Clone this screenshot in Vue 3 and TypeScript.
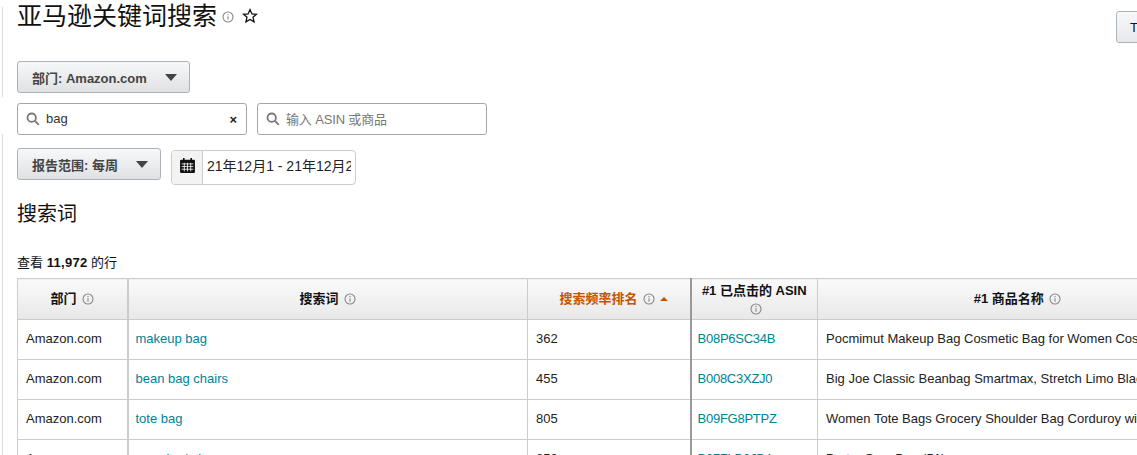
<script setup lang="ts">
interface Row { dept: string; term: string; rank: string; asin: string; title: string }
const rows: Row[] = [
  { dept: 'Amazon.com', term: 'makeup bag', rank: '362', asin: 'B08P6SC34B', title: 'Pocmimut Makeup Bag Cosmetic Bag for Women Cosmetic Travel' },
  { dept: 'Amazon.com', term: 'bean bag chairs', rank: '455', asin: 'B008C3XZJ0', title: 'Big Joe Classic Beanbag Smartmax, Stretch Limo Black' },
  { dept: 'Amazon.com', term: 'tote bag', rank: '805', asin: 'B09FG8PTPZ', title: 'Women Tote Bags Grocery Shoulder Bag Corduroy with Zipper' },
  { dept: 'Amazon.com', term: 'crossbody bag', rank: '850', asin: 'B07ZLB3JB4', title: 'Barter Sam Bag (51)' },
]
</script>

<template>
  <div class="page">
    <div class="rail rail-top"></div>
    <div class="rail rail-bottom"></div>
    <main class="content">
      <header class="title-row">
        <h1 class="title">亚马逊关键词搜索</h1>
        <svg class="info title-info" viewBox="0 0 12 12"><circle cx="6" cy="6" r="5" /><path d="M6 5.200v3.600M6 3v1.200" /></svg>
        <svg class="star" viewBox="0 0 16 16"><path d="M8 1.600l1.900 4.300 4.600.4-3.500 3 1.100 4.600L8 11.500l-4.100 2.400 1.100-4.600-3.500-3 4.600-.4z" /></svg>
      </header>
      <button class="top-btn">T</button>

      <button class="select dept-select">部门: Amazon.com<span class="caret"></span></button>

      <div class="search-row">
        <div class="field">
          <svg class="mag" viewBox="0 0 14 14"><circle cx="5.700" cy="5.700" r="4.200" /><path d="M8.800 8.800l4 4" /></svg>
          <span class="value">bag</span>
          <span class="clear">×</span>
        </div>
        <div class="field">
          <svg class="mag" viewBox="0 0 14 14"><circle cx="5.700" cy="5.700" r="4.200" /><path d="M8.800 8.800l4 4" /></svg>
          <span class="placeholder">输入 ASIN 或商品</span>
        </div>
      </div>

      <div class="range-row">
        <button class="select range-select">报告范围: 每周<span class="caret"></span></button>
        <div class="date">
          <span class="cal">
            <svg viewBox="0 0 16 16"><path class="cal-body" d="M1 3.500a1 1 0 0 1 1-1h12a1 1 0 0 1 1 1V14a1 1 0 0 1-1 1H2a1 1 0 0 1-1-1z" /><path class="cal-grid" d="M2.500 6.500h11M2.500 9h11M2.500 11.500h11M5 5.500v8M8 5.500v8M11 5.500v8" /><path class="cal-ring" d="M4.500 1v2.500M11.500 1v2.500" /></svg>
          </span>
          <span class="date-text">21年12月1 - 21年12月2</span>
        </div>
      </div>

      <h2 class="section">搜索词</h2>
      <p class="count">查看 <b>11,972</b> 的行</p>

      <table class="grid">
        <colgroup>
          <col class="c-dept" /><col class="c-term" /><col class="c-rank" /><col class="c-asin" /><col class="c-title" />
        </colgroup>
        <thead>
          <tr>
            <th class="thick">部门 <svg class="info" viewBox="0 0 12 12"><circle cx="6" cy="6" r="5" /><path d="M6 5.200v3.600M6 3v1.200" /></svg></th>
            <th>搜索词 <svg class="info" viewBox="0 0 12 12"><circle cx="6" cy="6" r="5" /><path d="M6 5.200v3.600M6 3v1.200" /></svg></th>
            <th class="sorted dark">搜索频率排名 <svg class="info" viewBox="0 0 12 12"><circle cx="6" cy="6" r="5" /><path d="M6 5.200v3.600M6 3v1.200" /></svg><span class="sort-up"></span></th>
            <th class="two-line">#1 已点击的 ASIN<br /><svg class="info" viewBox="0 0 12 12"><circle cx="6" cy="6" r="5" /><path d="M6 5.200v3.600M6 3v1.200" /></svg></th>
            <th>#1 商品名称 <svg class="info" viewBox="0 0 12 12"><circle cx="6" cy="6" r="5" /><path d="M6 5.200v3.600M6 3v1.200" /></svg></th>
          </tr>
        </thead>
        <tbody>
          <tr v-for="row in rows" :key="row.asin">
            <td class="thick">{{ row.dept }}</td>
            <td class="term-cell"><a class="link">{{ row.term }}</a></td>
            <td class="dark">{{ row.rank }}</td>
            <td class="asin-cell"><a class="link">{{ row.asin }}</a></td>
            <td class="clip"><span>{{ row.title }}</span></td>
          </tr>
        </tbody>
      </table>
    </main>
  </div>
</template>

<style>
html, body { margin: 0; overflow: hidden; background: #fff; }
</style>

<style scoped>
.page {
  position: relative;
  width: 1137px;
  height: 455px;
  overflow: hidden;
  background: #fff;
  color: #111;
  font-family: "Liberation Sans", "Noto Sans CJK SC", sans-serif;
  font-size: 13px;
}
.rail {
  position: absolute;
  left: 2px;
  width: 1px;
  background: #ddd;
}
.rail-top { top: 7px; height: 90px; }
.rail-bottom { top: 134px; bottom: 0; }
.content {
  position: absolute;
  left: 17px;
  top: 0;
  width: 1200px;
}
.title-row {
  display: flex;
  align-items: center;
  height: 32px;
}
.title {
  margin: 0;
  font-size: 25px;
  font-weight: 400;
  line-height: 32px;
  color: #111;
}
.info {
  width: 12px;
  height: 12px;
  margin-left: 2px;
  vertical-align: -2px;
  fill: none;
  stroke: #888;
  stroke-width: 1.100;
}
.title-info { margin-left: 5px; margin-top: 2px; }
.star {
  width: 16px;
  height: 16px;
  margin-left: 8px;
  margin-bottom: 1px;
  fill: none;
  stroke: #111;
  stroke-width: 1.300;
}
.top-btn {
  position: absolute;
  left: 1099px;
  top: 11px;
  width: 60px;
  height: 32px;
  padding: 0 0 0 13px;
  text-align: left;
  border: 1px solid #adb1b8;
  border-radius: 3px;
  background: linear-gradient(#f7f8fa, #e7e9ec);
  font: inherit;
  color: #111;
}
.select {
  display: flex;
  align-items: center;
  justify-content: space-between;
  box-sizing: border-box;
  height: 32px;
  padding: 0 12px 0 14px;
  border: 1px solid #adb1b8;
  border-radius: 3px;
  background: linear-gradient(#f7f8fa, #e0e1e3);
  color: #444;
  font: inherit;
  font-weight: 700;
}
.dept-select { width: 173px; margin-top: 29px; }
.caret {
  width: 0;
  height: 0;
  border-left: 6.500px solid transparent;
  border-right: 6.500px solid transparent;
  border-top: 7px solid #444;
}
.search-row {
  display: flex;
  gap: 10px;
  margin-top: 10px;
}
.field {
  display: flex;
  align-items: center;
  box-sizing: border-box;
  width: 230px;
  height: 32px;
  padding: 0 8px;
  border: 1px solid #a6a6a6;
  border-radius: 3px;
}
.mag {
  width: 14px;
  height: 14px;
  fill: none;
  stroke: #777;
  stroke-width: 1.800;
}
.value { margin: 0 0 2px 6px; flex: 1; color: #333; }
.placeholder { margin: 0 0 2px 6px; color: #777; letter-spacing: -.15px; }
.clear { font-weight: 700; font-size: 13px; line-height: 1; color: #222; margin-right: 1px; }
.range-row {
  display: flex;
  align-items: flex-start;
  gap: 10px;
  margin-top: 13px;
}
.range-select { width: 144px; }
.date {
  display: flex;
  box-sizing: border-box;
  width: 185px;
  height: 35px;
  margin-top: 2px;
  border: 1px solid #ccc;
  border-radius: 4px;
  overflow: hidden;
}
.cal {
  display: flex;
  align-items: center;
  justify-content: center;
  flex: none;
  width: 30px;
  padding-bottom: 4px;
  background: #f3f3f3;
  border-right: 1px solid #ccc;
}
.cal svg { width: 17px; height: 17px; }
.cal-body { fill: #111; }
.cal-grid { stroke: #f3f3f3; stroke-width: .8; fill: none; }
.cal-ring { stroke: #111; stroke-width: 1.500; }
.date-text {
  width: 144px;
  margin-left: 4px;
  font-size: 14px;
  line-height: 31px;
  white-space: nowrap;
  overflow: hidden;
  color: #222;
}
.section {
  margin: 15px 0 0;
  font-size: 20px;
  font-weight: 400;
  line-height: 28px;
  color: #111;
}
.count {
  margin: 26px 0 0;
  line-height: 18px;
  color: #111;
}
.count b { letter-spacing: .3px; }
.grid {
  margin-top: 6px;
  table-layout: fixed;
  border-collapse: collapse;
  width: 1200px;
  background: #fff;
}
.c-dept { width: 110px; }
.c-term { width: 400px; }
.c-rank { width: 163px; }
.c-asin { width: 127px; }
.c-title { width: 400px; }
th, td {
  box-sizing: border-box;
  border: 1px solid #ccc;
  padding: 0 8px;
  font-size: 13px;
}
th {
  height: 41px;
  text-align: center;
  font-weight: 700;
  color: #111;
  line-height: 18px;
  background: linear-gradient(#fafafa, #e8e8e8);
}
td {
  height: 40px;
  padding-bottom: 2px;
  color: #222;
  white-space: nowrap;
}
.sorted { padding-left: 18px; color: #c45500; }
.two-line { padding-top: 2px; }
.two-line .info { margin-left: 4px; }
.term-cell { padding-left: 7px; }
.asin-cell { padding-left: 6px; letter-spacing: -.25px; }
.thick { border-right: 2px solid #ccc; }
.dark { border-right: 2px solid #999; }
.sort-up {
  display: inline-block;
  width: 0;
  height: 0;
  margin-left: 5px;
  vertical-align: 2px;
  border-left: 4px solid transparent;
  border-right: 4px solid transparent;
  border-bottom: 4px solid #c45500;
}
.link { color: #008296; }
.clip { overflow: hidden; }
</style>
